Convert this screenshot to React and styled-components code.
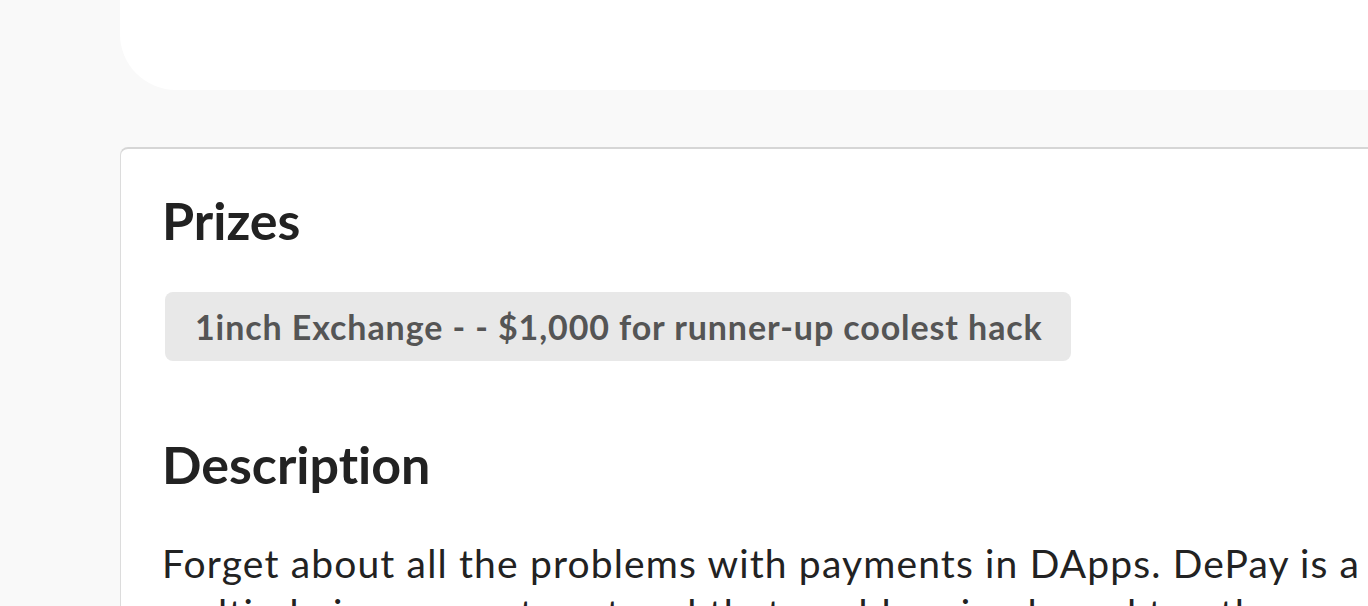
import React from "react";
import styled, { createGlobalStyle } from "styled-components";

const Global = createGlobalStyle`
  html, body { margin: 0; padding: 0; background: #f9f9f9; }
  body { font-family: Lato, "Open Sans", sans-serif; overflow: hidden; }
`;

const Page = styled.div`
  width: 1368px;
  height: 606px;
  overflow: hidden;
  padding-left: 120px;
  box-sizing: border-box;
  display: flex;
  flex-direction: column;
  gap: 57px;
`;

const HeaderCard = styled.div`
  width: 1300px;
  height: 90px;
  flex: none;
  background: #ffffff;
  border-bottom-left-radius: 56px;
`;

const Card = styled.section`
  width: 1300px;
  flex: none;
  background: #ffffff;
  border: 1px solid #dcdcdc;
  border-top: 2px solid #d6d6d6;
  border-radius: 8px;
  box-sizing: border-box;
  padding: 41px 0 40px 41px;
`;

const Heading = styled.h2`
  margin: 0;
  font-family: Lato, sans-serif;
  font-weight: 700;
  font-size: 52px;
  line-height: 60px;
  color: #222222;
  font-variant-ligatures: none;
`;

const Tags = styled.div`
  display: flex;
  flex-wrap: wrap;
  gap: 12px;
  margin: 42px 0 73px 3px;
`;

const Tag = styled.span`
  display: inline-flex;
  align-items: center;
  height: 69px;
  padding: 0 28px 0 30px;
  border-radius: 8px;
  background: #e8e8e8;
  color: #555555;
  font-family: Lato, sans-serif;
  font-weight: 700;
  font-size: 34px;
  letter-spacing: 0.9px;
  white-space: nowrap;
  font-variant-ligatures: none;
`;

const Body = styled.p`
  margin: 44px 0 0;
  font-family: Lato, sans-serif;
  font-size: 39px;
  letter-spacing: 1.15px;
  line-height: 50px;
  color: #222222;
  font-variant-ligatures: none;
`;

export default function App() {
  return (
    <>
      <Global />
      <Page>
        <HeaderCard />
        <Card>
          <Heading>Prizes</Heading>
          <Tags>
            <Tag>1inch Exchange - - $1,000 for runner-up coolest hack</Tag>
          </Tags>
          <Heading>Description</Heading>
          <Body>
            Forget about all the problems with payments in DApps. DePay is a
            multi-chain payment protocol that enables simple and trustless
            payments without any intermediaries in between.
          </Body>
        </Card>
      </Page>
    </>
  );
}
